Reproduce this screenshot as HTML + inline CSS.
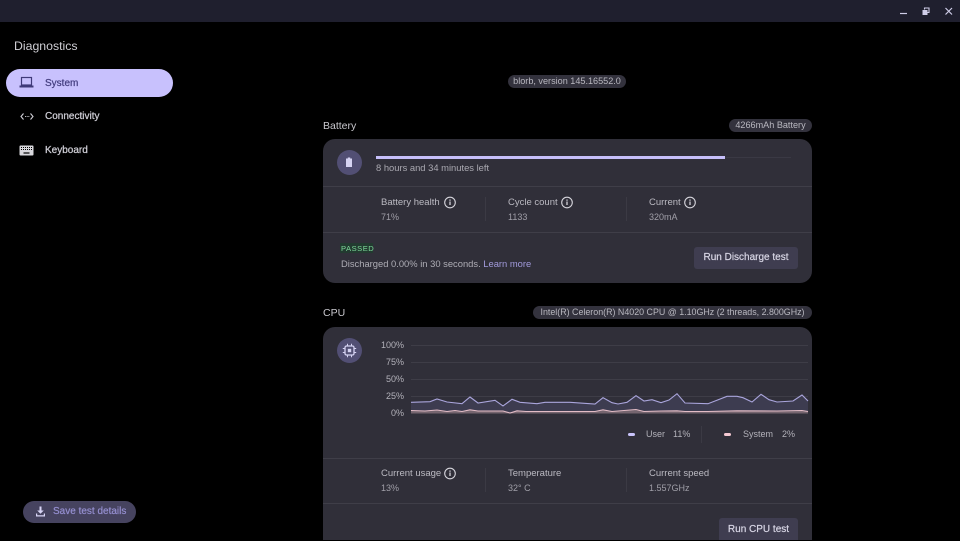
<!DOCTYPE html>
<html lang="en">
<head>
<meta charset="utf-8">
<title>Diagnostics</title>
<style>
html,body{margin:0;padding:0;background:#000;}
body{width:960px;height:540px;overflow:hidden;position:relative;font-family:"Liberation Sans",sans-serif;color:#d5d4da;font-size:9.5px;}
.a{position:absolute;white-space:nowrap;line-height:12px;}
.bar{position:absolute;left:0;top:0;width:960px;height:22px;background:#1f1f2e;}
.pill{position:absolute;left:6px;top:69px;width:167px;height:28px;border-radius:14px;background:#c8c1fd;}
.nav{font-size:10px;color:#cfced6;-webkit-text-stroke:.25px currentColor;}
.chip{position:absolute;height:13px;border-radius:7px;background:#33323d;color:#b9b8c0;font-size:9.1px;line-height:13px;text-align:center;white-space:nowrap;}
.card{position:absolute;left:323px;width:489px;background:#302f39;}
.hr{position:absolute;left:323px;width:489px;height:1px;background:#3f3e48;}
.vr{position:absolute;width:1px;height:24px;background:#3b3a44;}
.circle{position:absolute;left:337px;width:25px;height:25px;border-radius:50%;background:#524f74;}
.btn{position:absolute;background:#3f3d50;border-radius:3px;color:#d9d7e6;font-size:10px;-webkit-text-stroke:.2px currentColor;text-align:center;white-space:nowrap;}
.h{font-size:10.5px;color:#c9c8ce;}
.l{font-size:9.5px;color:#bbbac2;}
.v{font-size:9px;color:#a09fa8;}
svg{position:absolute;overflow:visible;}
</style>
</head>
<body>
<div class="bar"></div>
<svg style="left:0;top:0" width="960" height="22" fill="none" stroke="#cfcde8" stroke-width="1.200">
<path d="M900 13.500h7"/>
<rect x="922.500" y="10" width="5" height="5" fill="#cfcde8" stroke="none"/>
<path d="M924.500 9.500V8h4.500v4.500h-1.500" stroke-width="1.100"/>
<path d="M945.500 8l6.500 6.500M952 8l-6.500 6.500"/>
</svg>

<div class="a" style="left:14px;top:39px;font-size:12.300px;line-height:14px;color:#cfced4">Diagnostics</div>
<div class="pill"></div>
<svg style="left:19px;top:76px" width="16" height="14" fill="none">
<rect x="2.500" y="1.500" width="10" height="7.500" stroke="#3f3a78" stroke-width="1.200"/>
<rect x="0.500" y="9.500" width="14" height="2" fill="#3f3a78"/>
</svg>
<div class="a nav" style="left:45px;top:77px;color:#453f80;line-height:13px">System</div>
<svg style="left:20px;top:111px" width="14" height="11" fill="none" stroke="#cfced6" stroke-width="1.100">
<path d="M3.500 2.500L1 5.500l2.500 3M10.500 2.500L13 5.500l-2.500 3"/>
<path d="M5 5.500h.9M6.700 5.500h.9M8.400 5.500h.9"/>
</svg>
<div class="a nav" style="left:45px;top:110px;line-height:13px">Connectivity</div>
<svg style="left:19px;top:145px" width="16" height="12">
<rect x="0.500" y="0.500" width="14" height="10" rx="1" fill="#d8d7dc"/>
<path d="M2 2.500h11M2 4.500h11" stroke="#000" stroke-width="1" stroke-dasharray="1 1"/>
<path d="M4.500 8h6" stroke="#000" stroke-width="1.200"/>
</svg>
<div class="a nav" style="left:45px;top:144px;line-height:13px">Keyboard</div>

<div class="chip" style="left:508px;top:75px;width:118px">blorb, version 145.16552.0</div>

<div class="a h" style="left:323px;top:120px">Battery</div>
<div class="chip" style="left:729px;top:119px;width:83px">4266mAh Battery</div>
<div class="card" style="top:139px;height:144px;border-radius:12px"></div>
<div class="circle" style="top:150px"></div>
<svg style="left:345px;top:157px" width="9" height="11"><path d="M2.800 0.500h2.400v1H7v8.500H1V1.500h1.800z" fill="#d6d3f3"/></svg>
<div style="position:absolute;left:376px;top:156px;width:349px;height:3px;background:#c6bffa"></div>
<div style="position:absolute;left:725px;top:157px;width:66px;height:1px;background:#3a3944"></div>
<div class="a l" style="left:376px;top:162px;font-size:9.400px;color:#aaa9b1">8 hours and 34 minutes left</div>
<div class="hr" style="top:186px"></div>
<div class="a l" style="left:381px;top:197px">Battery health</div>
<div class="a v" style="left:381px;top:211px">71%</div>
<div class="vr" style="left:485px;top:197px"></div>
<div class="a l" style="left:508px;top:197px">Cycle count</div>
<div class="a v" style="left:508px;top:211px">1133</div>
<div class="vr" style="left:626px;top:197px"></div>
<div class="a l" style="left:649px;top:197px">Current</div>
<div class="a v" style="left:649px;top:211px">320mA</div>
<div class="hr" style="top:232px"></div>
<div style="position:absolute;left:340px;top:243px;width:33px;height:10px;background:#223a30"></div>
<div class="a" style="left:341px;top:243px;font-size:7.600px;letter-spacing:.5px;color:#7fd99b">PASSED</div>
<div class="a l" style="left:341px;top:258px;font-size:9.400px;color:#aeadb5">Discharged 0.00% in 30 seconds. <span style="color:#a29bdc">Learn more</span></div>
<div class="btn" style="left:694px;top:247px;width:104px;height:22px;line-height:21px">Run Discharge test</div>

<div class="a h" style="left:323px;top:307px">CPU</div>
<div class="chip" style="left:533px;top:306px;width:279px;font-size:8.900px">Intel(R) Celeron(R) N4020 CPU @ 1.10GHz (2 threads, 2.800GHz)</div>
<div class="card" style="top:327px;height:213px;border-radius:12px 12px 0 0"></div>
<div class="circle" style="top:338px"></div>
<svg style="left:342px;top:343px" width="15" height="15" fill="none" stroke="#d6d3f3">
<rect x="3" y="3" width="9" height="9" rx="1.500" stroke-width="1.300"/>
<rect x="5.800" y="5.800" width="3.400" height="3.400" fill="#d6d3f3" stroke="none"/>
<path d="M5.500 .8v2M9.500 .8v2M5.500 12.200v2M9.500 12.200v2M.8 5.500h2M.8 9.500h2M12.200 5.500h2M12.200 9.500h2" stroke-width="1"/>
</svg>
<div class="a v" style="left:374px;top:339px;width:30px;text-align:right;color:#b3b2ba">100%</div>
<div class="a v" style="left:374px;top:356px;width:30px;text-align:right;color:#b3b2ba">75%</div>
<div class="a v" style="left:374px;top:373px;width:30px;text-align:right;color:#b3b2ba">50%</div>
<div class="a v" style="left:374px;top:390px;width:30px;text-align:right;color:#b3b2ba">25%</div>
<div class="a v" style="left:374px;top:407px;width:30px;text-align:right;color:#b3b2ba">0%</div>
<svg style="left:0;top:0" width="960" height="540" fill="none">
<path d="M411 345.500H808M411 362.500H808M411 379.500H808M411 396.500H808" stroke="#3e3d47" stroke-width="1"/>
<path d="M411 402.300L430 401.700L437 399L447 402L462 403.700L470 397L478 403L495 400.300L503 406L512 399.300L520 402.300L537 403.700L545 402.300L570 402.300L595 404L603 397.700L612 402.700L618 404L627 402.300L636 395.700L644 401L652 399.700L661 402.700L669 400L677 393.700L685 403L708 403.700L727 396.300L737 396.300L743 397.700L752 402L761 394.300L769 399.700L777 402L793 401L802 395L808 401V413H411Z" fill="#3d3c50"/>
<path d="M411 410.500L425 411L437 410L447 411.500L455 410.500L462 411.500L470 409.800L478 411L503 411L510 413L517 410.800L526 411.500L570 411.500L595 411.500L603 409.800L612 411.500L636 409.500L644 411.500L661 411L677 410.800L685 411.500L708 411.500L737 410.800L777 411L802 410.500L808 411.500V413.500H411Z" fill="#75656f"/>
<path d="M411 402.300L430 401.700L437 399L447 402L462 403.700L470 397L478 403L495 400.300L503 406L512 399.300L520 402.300L537 403.700L545 402.300L570 402.300L595 404L603 397.700L612 402.700L618 404L627 402.300L636 395.700L644 401L652 399.700L661 402.700L669 400L677 393.700L685 403L708 403.700L727 396.300L737 396.300L743 397.700L752 402L761 394.300L769 399.700L777 402L793 401L802 395L808 401" stroke="#aaa5dc" stroke-width="1.100"/>
<path d="M411 410.500L425 411L437 410L447 411.500L455 410.500L462 411.500L470 409.800L478 411L503 411L510 413L517 410.800L526 411.500L570 411.500L595 411.500L603 409.800L612 411.500L636 409.500L644 411.500L661 411L677 410.800L685 411.500L708 411.500L737 410.800L777 411L802 410.500L808 411.500" stroke="#e2bcc6" stroke-width="1.100"/>
</svg>
<div style="position:absolute;left:628px;top:433px;width:7px;height:3px;border-radius:1.500px;background:#c9c3fb"></div>
<div class="a v" style="left:646px;top:428px;color:#b3b2ba">User</div>
<div class="a v" style="left:673px;top:428px;color:#b3b2ba">11%</div>
<div class="vr" style="left:701px;top:426px;height:17px"></div>
<div style="position:absolute;left:724px;top:433px;width:7px;height:3px;border-radius:1.500px;background:#f4c9d3"></div>
<div class="a v" style="left:743px;top:428px;color:#b3b2ba">System</div>
<div class="a v" style="left:782px;top:428px;color:#b3b2ba">2%</div>
<div class="hr" style="top:458px"></div>
<div class="a l" style="left:381px;top:468px">Current usage</div>
<div class="a v" style="left:381px;top:482px">13%</div>
<div class="vr" style="left:485px;top:468px"></div>
<div class="a l" style="left:508px;top:468px">Temperature</div>
<div class="a v" style="left:508px;top:482px">32° C</div>
<div class="vr" style="left:626px;top:468px"></div>
<div class="a l" style="left:649px;top:468px">Current speed</div>
<div class="a v" style="left:649px;top:482px">1.557GHz</div>
<div class="hr" style="top:503px"></div>
<div class="btn" style="left:719px;top:518px;width:79px;height:22px;line-height:23px;border-radius:3px 3px 0 0">Run CPU test</div>

<svg style="left:0;top:0" width="960" height="540" fill="none" stroke="#d5d4db" stroke-width="1.100">
<circle cx="450" cy="202.500" r="5.300"/><path d="M450 201.500v3.500M450 199.500v1.200" stroke-width="1.300"/>
<circle cx="567" cy="202.500" r="5.300"/><path d="M567 201.500v3.500M567 199.500v1.200" stroke-width="1.300"/>
<circle cx="690" cy="202.500" r="5.300"/><path d="M690 201.500v3.500M690 199.500v1.200" stroke-width="1.300"/>
<circle cx="450" cy="473.500" r="5.300"/><path d="M450 472.500v3.500M450 470.500v1.200" stroke-width="1.300"/>
</svg>

<div style="position:absolute;left:23px;top:501px;width:113px;height:22px;border-radius:11px;background:#46435f"></div>
<svg style="left:35px;top:506px" width="12" height="12" fill="#d8d5f5"><path d="M4.500 0.500h2v4h2.300L5.500 7.800 2.200 4.500h2.300zM1 7.500h1.200V9.300h6.600V7.500H10v3H1z"/></svg>
<div class="a" style="left:53px;top:505px;font-size:10px;line-height:13px;-webkit-text-stroke:.2px #958fd0;color:#958fd0">Save test details</div>
</body>
</html>
